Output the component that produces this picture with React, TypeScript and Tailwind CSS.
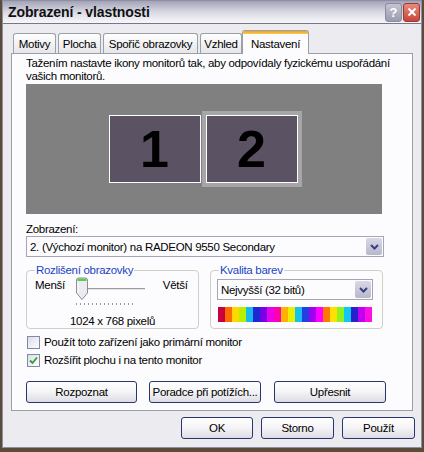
import React from 'react';

const font = { fontFamily: '"Liberation Sans", Arial, sans-serif' };
const txt = 'text-[11.5px] leading-[14px] tracking-[-0.3px] whitespace-nowrap';

const stripes = [
  'bg-[#c8003c]', 'bg-[#ff6a00]', 'bg-[#ffd800]', 'bg-[#b8f000]', 'bg-[#18b8f0]',
  'bg-[#1a2ad0]', 'bg-[#7800e8]', 'bg-[#e800e8]', 'bg-[#ff00b0]', 'bg-[#ffb000]',
  'bg-[#e8f000]', 'bg-[#18c0f0]', 'bg-[#2040e0]', 'bg-[#a000f0]', 'bg-[#ff00ff]',
  'bg-[#ff7800]', 'bg-[#ffe000]', 'bg-[#90f020]', 'bg-[#10c8f0]', 'bg-[#2820c8]',
  'bg-[#c000f0]', 'bg-[#ff10e0]',
];

function Chevron() {
  return (
    <svg width="9" height="6" viewBox="0 0 9 6">
      <path d="M1 1 L4.5 4.5 L8 1" fill="none" stroke="#3b3f82" strokeWidth="2" />
    </svg>
  );
}

function Select({ text, className }: { text: string; className: string }) {
  return (
    <div className={`flex h-[21px] items-center border border-[#a5a5b5] bg-[#fcfcfe] ${className}`}>
      <span className={`flex-1 truncate pl-[3px] text-black ${txt}`}>{text}</span>
      <div className="m-[1px] flex h-[17px] w-[16px] items-center justify-center rounded-[2px] bg-gradient-to-b from-[#d8d8e6] to-[#b8b8cc]">
        <Chevron />
      </div>
    </div>
  );
}

function Button({ label, className }: { label: string; className: string }) {
  return (
    <div
      className={`flex h-[22px] items-center justify-center rounded-[3px] border border-[#27366e] bg-gradient-to-b from-[#ffffff] via-[#f4f4f6] to-[#dcdce4] text-black ${txt} ${className}`}
    >
      {label}
    </div>
  );
}

function Checkbox({ checked, label }: { checked?: boolean; label: string }) {
  return (
    <div className="flex items-center gap-[4px]">
      <div className="flex h-[13px] w-[13px] items-center justify-center border border-[#7e8aa8] bg-gradient-to-br from-[#dcdce6] to-[#ffffff]">
        {checked && (
          <svg width="9" height="9" viewBox="0 0 9 9">
            <path d="M1 4.5 L3.5 7 L8 1.5" fill="none" stroke="#2ca02c" strokeWidth="1.8" />
          </svg>
        )}
      </div>
      <span className={`text-black ${txt}`}>{label}</span>
    </div>
  );
}

export default function App() {
  const tabs = [
    { label: 'Motivy', w: 'w-[43px]' },
    { label: 'Plocha', w: 'w-[43px]' },
    { label: 'Spořič obrazovky', w: 'w-[95px]' },
    { label: 'Vzhled', w: 'w-[42px]' },
  ];

  return (
    <div className="h-[452px] w-[424px] overflow-hidden bg-[#5a4b3a]" style={font}>
      <div className="ml-[2px] flex h-[448px] w-[420px] flex-col border border-[#8f8fa3] bg-[#ecebef]">
        {/* Title bar */}
        <div className="flex h-[23px] items-center border-b border-[#77768c] bg-gradient-to-b from-[#a3a3b8] via-[#d9d9e4] to-[#f7f7fa] pl-[5px] pr-[1px]">
          <span className="flex-1 text-[14px] font-bold leading-[16px] tracking-[-0.1px] text-[#101010]">Zobrazení - vlastnosti</span>
          <div className="flex gap-[1px]">
            <div className="flex h-[19px] w-[17px] items-center justify-center rounded-[3px] border border-[#8a8aa0] bg-gradient-to-b from-[#c4c4d4] to-[#9c9cb0] text-[13px] font-bold leading-none text-white">
              ?
            </div>
            <div className="flex h-[19px] w-[17px] items-center justify-center rounded-[3px] border border-[#9a3838] bg-gradient-to-b from-[#e88a7a] to-[#c8443a]">
              <svg width="10" height="10" viewBox="0 0 10 10">
                <path d="M1.5 1.5 L8.5 8.5 M8.5 1.5 L1.5 8.5" stroke="#ffffff" strokeWidth="2" />
              </svg>
            </div>
          </div>
        </div>

        {/* Tabs */}
        <div className="ml-[8px] mt-[6px] flex h-[23px] items-end pl-[2px]">
          {tabs.map((t) => (
            <div
              key={t.label}
              className={`mr-[2px] flex h-[20px] items-center justify-center rounded-t-[3px] border border-b-0 border-[#9aa0a8] bg-gradient-to-b from-[#ffffff] to-[#e6e6ea] text-black ${txt} ${t.w}`}
            >
              {t.label}
            </div>
          ))}
          <div className="relative z-10 -mb-[1px] -ml-[2px] flex h-[24px] w-[67px] flex-col rounded-t-[3px] border border-b-0 border-[#9aa0a8] bg-[#fcfcfe]">
            <div className="h-[3px] rounded-t-[2px] bg-gradient-to-b from-[#e8a030] to-[#ffcc40]" />
            <div className={`flex flex-1 items-center justify-center text-black ${txt}`}>Nastavení</div>
          </div>
        </div>

        {/* Panel */}
        <div className="ml-[8px] flex h-[358px] w-[402px] flex-col border border-[#9aa0a8] bg-[#fcfcfe] pl-[14px] pt-[3px]">
          <p className="w-[370px] text-[11.5px] leading-[13px] tracking-[-0.3px] text-black">
            Tažením nastavte ikony monitorů tak, aby odpovídaly fyzickému uspořádání vašich monitorů.
          </p>

          <div className="mt-[1px] flex h-[130px] w-[356px] items-center justify-center gap-[1px] bg-[#808080] pl-[2px]">
            <div className="flex h-[68px] w-[92px] items-center justify-center border border-white bg-[#5b5363] text-[52px] font-bold leading-none text-black">
              1
            </div>
            <div className="border-[4px] border-[#a6a6a8]">
              <div className="flex h-[68px] w-[92px] items-center justify-center border border-white bg-[#5b5363] text-[52px] font-bold leading-none text-black">
                2
              </div>
            </div>
          </div>

          <span className={`mt-[8px] text-black ${txt}`}>Zobrazení:</span>
          <Select text="2. (Výchozí monitor) na RADEON 9550 Secondary" className="w-[358px]" />

          <div className="mt-[6px] flex gap-[11px]">
            <fieldset className="h-[66px] w-[173px] rounded-[4px] border border-[#d0d0c4] px-[8px]">
              <legend className={`px-[1px] text-[#1a44c0] ${txt}`}>Rozlišení obrazovky</legend>
              <div className="flex h-[27px] items-start">
                <span className={`mt-[1px] text-black ${txt}`}>Menší</span>
                <div className="relative ml-[10px] h-[27px] w-[72px]">
                  <div className="absolute left-[4px] top-[11px] h-[2px] w-[66px] border-t border-[#9c9c9c] bg-[#e4e4e4]" />
                  <svg className="absolute left-[0px] top-[0px]" width="14" height="24" viewBox="0 0 14 24">
                    <path d="M1.5 3 Q1.5 1 3.5 1 H10.5 Q12.5 1 12.5 3 V16 L7 22.5 L1.5 16 Z" fill="#ececf0" stroke="#8c8c9c" />
                    <rect x="2.5" y="1.5" width="9" height="2.5" fill="#5ccc4c" />
                    <path d="M3 6 V16" stroke="#ffffff" />
                  </svg>
                  <div className="absolute left-[1px] top-[26px] flex gap-[3px]">
                    {Array.from({ length: 15 }).map((_, i) => (
                      <div key={i} className="h-[2px] w-[1px] bg-[#9a9aa8]" />
                    ))}
                  </div>
                </div>
                <span className={`ml-[16px] mt-[1px] text-black ${txt}`}>Větší</span>
              </div>
              <div className={`mt-[10px] text-center text-black ${txt}`}>1024 x 768 pixelů</div>
            </fieldset>

            <fieldset className="h-[66px] w-[173px] rounded-[4px] border border-[#d0d0c4] px-[6px]">
              <legend className={`ml-[2px] px-[1px] text-[#1a44c0] ${txt}`}>Kvalita barev</legend>
              <Select text="Nejvyšší (32 bitů)" className="mt-[2px] w-[156px]" />
              <div className="ml-[1px] mt-[7px] flex h-[15px] w-[154px]">
                {stripes.map((c, i) => (
                  <div key={i} className={`h-full flex-1 ${c}`} />
                ))}
              </div>
            </fieldset>
          </div>

          <div className="mt-[6px] flex flex-col gap-[4px] pl-[1px]">
            <Checkbox label="Použít toto zařízení jako primární monitor" />
            <Checkbox checked label="Rozšířit plochu i na tento monitor" />
          </div>

          <div className="mt-[14px] flex">
            <Button label="Rozpoznat" className="w-[111px]" />
            <Button label="Poradce při potížích..." className="ml-[12px] w-[112px]" />
            <Button label="Upřesnit" className="ml-[13px] w-[112px]" />
          </div>
        </div>

        {/* Bottom buttons */}
        <div className="mt-[6px] flex justify-end gap-[8px] pr-[6px]">
          <Button label="OK" className="w-[72px] border-[#1c3a80]" />
          <Button label="Storno" className="w-[73px]" />
          <Button label="Použít" className="w-[73px]" />
        </div>
      </div>
    </div>
  );
}
